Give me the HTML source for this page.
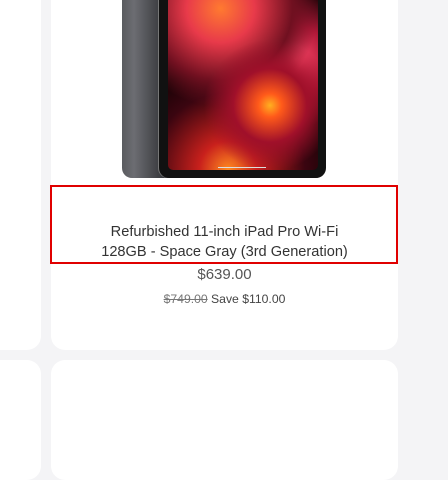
<!DOCTYPE html>
<html><head><style>
body{margin:0;width:448px;height:448px;background:#f4f4f6;position:relative;overflow:hidden;font-family:"Liberation Sans",sans-serif}
.c{position:absolute;background:#fff;border-radius:14px}
.t{position:absolute;left:51px;width:347px;text-align:center;color:#333;white-space:nowrap}
</style></head><body>
<div class="c" style="left:-20px;top:-20px;width:61px;height:370px"></div>
<div class="c" style="left:51px;top:-20px;width:347px;height:370px"></div>
<div class="c" style="left:-20px;top:360px;width:61px;height:120px"></div>
<div class="c" style="left:51px;top:360px;width:347px;height:120px"></div>
<div style="position:absolute;left:122px;top:-10px;width:60px;height:188px;border-radius:0 0 0 10px;background:linear-gradient(90deg,#5a5b5f,#6c6d72 20%,#3f4044 60%,#2e2f33)"></div>
<div style="position:absolute;left:159px;top:-10px;width:167px;height:188px;border-radius:0 0 10px 10px;background:#111;box-shadow:-1px 0 0 #777"></div>
<div style="position:absolute;left:168px;top:0;width:150px;height:170px;border-radius:0 0 5px 5px;overflow:hidden;background:
radial-gradient(circle at 68% 62%,#ffb020 0,#ff5a1a 8%,#a0102a 25%,transparent 45%),
radial-gradient(circle at 35% 5%,#ff7a30 0,#e83a4a 18%,#701020 38%,transparent 52%),
radial-gradient(circle at 40% 100%,#ff8a20 0,#c8201c 15%,#3a0510 40%,transparent 55%),
radial-gradient(circle at 85% 35%,#ff4a6a 0,#b01838 20%,transparent 40%),#1a0306"></div>
<div style="position:absolute;left:218px;top:167px;width:48px;height:1px;background:#ddd"></div>
<div style="position:absolute;left:50px;top:185px;width:344px;height:75px;border:2px solid #e00000"></div>
<div class="t" style="top:222px;font-size:14.6px;line-height:20px">Refurbished 11-inch iPad Pro Wi-Fi<br>128GB - Space Gray (3rd Generation)</div>
<div class="t" style="top:266px;font-size:15px;color:#555">$639.00</div>
<div class="t" style="top:292px;font-size:12.2px;color:#444"><span style="text-decoration:line-through;color:#777">$749.00</span> Save $110.00</div>
</body></html>
